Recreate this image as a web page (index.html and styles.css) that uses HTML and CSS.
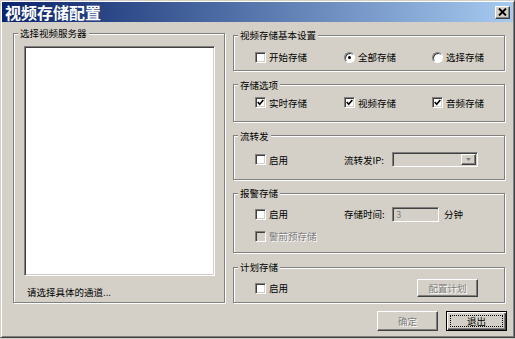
FILE: index.html
```html
<!DOCTYPE html>
<html lang="zh-CN">
<head>
    <meta charset="UTF-8">
    <title>视频存储配置</title>
    <link rel="stylesheet" href="styles.css">
</head>
<body>
    <div class="window">
        <div class="titlebar">
            <span class="title">视频存储配置</span>
            <span class="close">
                <svg width="9" height="8" viewBox="0 0 9 8"><path d="M1 0.5 L8 7.5 M8 0.5 L1 7.5" stroke="#000" stroke-width="1.9" fill="none"/></svg>
            </span>
        </div>

        <div class="columns">
            <fieldset class="group server-group">
                <legend>选择视频服务器</legend>
                <div class="listbox"></div>
                <div class="hint">请选择具体的通道...</div>
            </fieldset>

            <div class="settings">
                <fieldset class="group g-basic">
                    <legend>视频存储基本设置</legend>
                    <div class="row">
                        <label class="check"><span class="box"></span>开始存储</label>
                        <label class="check"><span class="radio on"></span>全部存储</label>
                        <label class="check"><span class="radio"></span>选择存储</label>
                    </div>
                </fieldset>

                <fieldset class="group g-options">
                    <legend>存储选项</legend>
                    <div class="row">
                        <label class="check"><span class="box on"><svg width="7" height="7" viewBox="0 0 7 7"><path d="M0.7 3 L2.7 5.2 L6.3 1" stroke="#000" stroke-width="1.6" fill="none"/></svg></span>实时存储</label>
                        <label class="check"><span class="box on"><svg width="7" height="7" viewBox="0 0 7 7"><path d="M0.7 3 L2.7 5.2 L6.3 1" stroke="#000" stroke-width="1.6" fill="none"/></svg></span>视频存储</label>
                        <label class="check"><span class="box on"><svg width="7" height="7" viewBox="0 0 7 7"><path d="M0.7 3 L2.7 5.2 L6.3 1" stroke="#000" stroke-width="1.6" fill="none"/></svg></span>音频存储</label>
                    </div>
                </fieldset>

                <fieldset class="group g-forward">
                    <legend>流转发</legend>
                    <div class="row row-wide">
                        <label class="check"><span class="box"></span>启用</label>
                        <div class="field">
                            <span class="field-label">流转发IP:</span>
                            <span class="combo"><span class="drop"><svg width="5" height="3" viewBox="0 0 5 3"><path d="M0 0 H5 L2.5 3 Z" fill="#808080"/></svg></span></span>
                        </div>
                    </div>
                </fieldset>

                <fieldset class="group g-alarm">
                    <legend>报警存储</legend>
                    <div class="row row-wide">
                        <label class="check"><span class="box"></span>启用</label>
                        <div class="field">
                            <span class="field-label">存储时间:</span>
                            <span class="textbox">3</span>
                            <span class="unit">分钟</span>
                        </div>
                    </div>
                    <div class="row row-wide">
                        <label class="check disabled"><span class="box"></span>警前预存储</label>
                    </div>
                </fieldset>

                <fieldset class="group g-plan">
                    <legend>计划存储</legend>
                    <div class="row row-wide">
                        <label class="check"><span class="box"></span>启用</label>
                        <div class="field">
                            <button class="btn plan-btn" disabled>配置计划</button>
                        </div>
                    </div>
                </fieldset>
            </div>
        </div>

        <div class="actions">
            <button class="btn" disabled>确定</button>
            <button class="btn default">退出</button>
        </div>
    </div>
</body>
</html>
```

FILE: styles.css
```css
/* General */
* {
    box-sizing: border-box;
}

body {
    margin: 0;
    background-color: #d4d0c8;
    font-family: "Noto Sans CJK SC", "Noto Sans", sans-serif;
    font-size: 9.5px;
    color: #000;
}

/* Window frame */
.window {
    width: 515px;
    height: 338px;
    padding: 1px;
    border: 1px solid;
    border-color: #d4d0c8 #404040 #404040 #d4d0c8;
    box-shadow: inset 1px 1px #fff, inset -1px -1px #808080;
    background-color: #d4d0c8;
}

.titlebar {
    height: 20px;
    display: flex;
    align-items: center;
    justify-content: space-between;
    padding: 0 3px 0 3px;
    background: linear-gradient(to right, #0a246a, #a6caf0);
}

.title {
    color: #fff;
    font-weight: bold;
    font-size: 16px;
    line-height: 20px;
}

.close {
    width: 15px;
    height: 13px;
    display: flex;
    align-items: center;
    justify-content: center;
    background-color: #d4d0c8;
    border: 1px solid;
    border-color: #fff #404040 #404040 #fff;
    box-shadow: inset -1px -1px #808080;
}

/* Layout */
.columns {
    display: flex;
    align-items: flex-start;
    gap: 8px;
    padding: 5px 0 0 11px;
}

.settings {
    width: 272px;
    height: 274px;
    margin-top: 2px;
    display: flex;
    flex-direction: column;
    justify-content: space-between;
}

/* Group boxes */
.group {
    margin: 0;
    padding: 0;
    min-width: 0;
    border: 1px solid #808080;
    box-shadow: inset 1px 1px #fff, 1px 1px #fff;
}

.group legend {
    margin-left: 4px;
    padding: 0 2px;
    line-height: 12px;
    background-color: #d4d0c8;
}

.server-group {
    width: 212px;
    height: 276px;
}

.g-basic { height: 42px; padding-top: 8px; }
.g-options { height: 43px; padding-top: 4px; }
.g-forward { height: 50px; padding-top: 10px; }
.g-alarm { height: 66px; padding-top: 7px; }
.g-plan { height: 42px; padding-top: 6px; }

.g-alarm .row + .row {
    margin-top: 6px;
}

.listbox {
    height: 230px;
    margin: 7px 9px 0 10px;
    background-color: #fff;
    border: 1px solid;
    border-color: #808080 #fff #fff #808080;
    box-shadow: inset 1px 1px #404040, inset -1px -1px #d4d0c8;
}

.hint {
    margin: 10px 0 0 13px;
    line-height: 12px;
}

/* Rows */
.row {
    height: 16px;
    display: grid;
    grid-template-columns: 89px 88px auto;
    align-items: center;
    padding-left: 21px;
}

.row-wide {
    grid-template-columns: 89px auto;
}

.check {
    display: flex;
    align-items: center;
    gap: 3px;
    line-height: 12px;
    white-space: nowrap;
}

.check.disabled {
    color: #808080;
    text-shadow: 1px 1px #fff;
}

.box {
    width: 11px;
    height: 11px;
    display: flex;
    align-items: center;
    justify-content: center;
    background-color: #fff;
    border: 1px solid;
    border-color: #808080 #fff #fff #808080;
    box-shadow: inset 1px 1px #404040, inset -1px -1px #d4d0c8;
}

.check.disabled .box {
    background-color: #d4d0c8;
}

.radio {
    width: 11px;
    height: 11px;
    display: flex;
    align-items: center;
    justify-content: center;
    border-radius: 50%;
    background-color: #fff;
    border: 1px solid;
    border-color: #808080 #fff #fff #808080;
    box-shadow: inset 1px 1px #404040;
}

.radio.on::after {
    content: "";
    width: 3px;
    height: 3px;
    border-radius: 50%;
    background-color: #000;
}

/* Fields */
.field {
    display: flex;
    align-items: center;
}

.field-label {
    width: 48px;
    line-height: 12px;
    white-space: nowrap;
}

.combo,
.textbox {
    height: 15px;
    background-color: #d4d0c8;
    border: 1px solid;
    border-color: #808080 #fff #fff #808080;
    box-shadow: inset 1px 1px #404040, inset -1px -1px #d4d0c8;
}

.combo {
    width: 86px;
    display: flex;
    justify-content: flex-end;
    padding: 1px;
}

.drop {
    width: 15px;
    height: 11px;
    display: flex;
    align-items: center;
    justify-content: center;
    border: 1px solid;
    border-color: #fff #404040 #404040 #fff;
    box-shadow: inset -1px -1px #808080;
}

.textbox {
    width: 47px;
    padding-left: 3px;
    line-height: 13px;
    color: #808080;
}

.unit {
    margin-left: 5px;
}

/* Buttons */
.btn {
    width: 61px;
    height: 20px;
    padding: 0;
    font-family: inherit;
    font-size: 9.5px;
    color: #000;
    background-color: #d4d0c8;
    border: 1px solid;
    border-color: #fff #404040 #404040 #fff;
    box-shadow: inset -1px -1px #808080;
}

.btn:disabled {
    color: #808080;
    text-shadow: 1px 1px #fff;
}

.btn.default {
    border: 1px solid #000;
    box-shadow: inset 1px 1px #fff, inset -1px -1px #404040, inset -2px -2px #808080;
    outline: 1px dotted #000;
    outline-offset: -5px;
}

.plan-btn {
    height: 18px;
    margin-left: 73px;
}

.actions {
    display: flex;
    justify-content: flex-end;
    gap: 8px;
    margin-top: 8px;
    padding-right: 6px;
}
```
